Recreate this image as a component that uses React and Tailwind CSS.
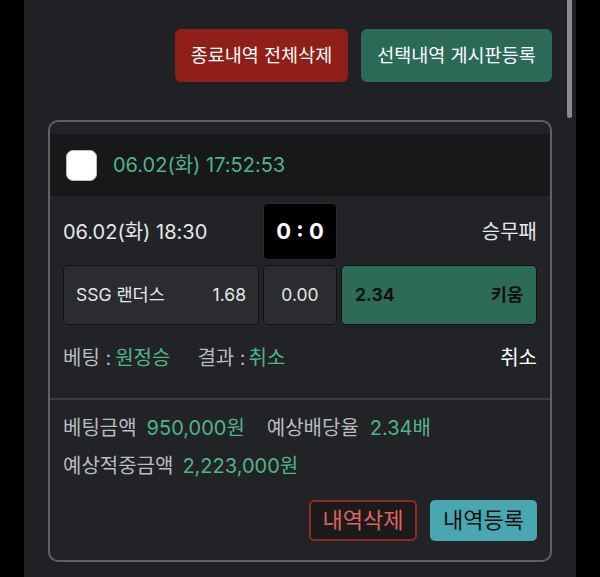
import React from "react";

const font = { fontFamily: 'Inter, "Noto Sans CJK KR", sans-serif' };

export default function App() {
  return (
    <div className="w-[600px] h-[577px] bg-black px-[24px]" style={font}>
      <div className="relative h-full bg-[#1f2124] px-[24px] overflow-hidden">
        <div className="absolute right-[4px] top-0 w-[5px] h-[118px] rounded-b-full bg-[#8a8b8f]" />
        <div className="flex justify-end gap-[13px] pt-[29px]">
          <button className="h-[53px] w-[173px] rounded-[6px] bg-[#8f1f18] text-white text-[18.5px]">
            종료내역 전체삭제
          </button>
          <button className="h-[53px] w-[191px] rounded-[6px] bg-[#2c6a58] text-white text-[18.5px]">
            선택내역 게시판등록
          </button>
        </div>

        <div className="mt-[38px] rounded-[10px] border-2 border-[#5f6164] bg-[#212327] pt-[12px] pb-[19px]">
          <div className="flex h-[62px] items-center gap-[16px] bg-[#17181a] px-[16px]">
            <div className="h-[31px] w-[31px] rounded-[7px] bg-white border border-[#bbb]" />
            <span className="text-[20px] text-[#50b487]">06.02(화) 17:52:53</span>
          </div>

          <div className="px-[13px]">
            <div className="mt-[7px] flex items-center">
              <div className="w-[200px] text-[20px] text-[#e6e7e9]">06.02(화) 18:30</div>
              <div className="flex h-[57px] w-[74px] items-center justify-center rounded-[4px] border border-[#2b2d31] bg-black text-[22px] font-bold text-white">
                0 : 0
              </div>
              <div className="flex-1 text-right text-[20px] text-[#e6e7e9]">승무패</div>
            </div>

            <div className="mt-[5px] flex h-[60px] gap-[4px]">
              <div className="flex w-[196px] items-center justify-between rounded-[5px] border border-[#111214] bg-[#2a2c30] px-[12px] text-[17.5px] text-[#e6e7e9]">
                <span>SSG 랜더스</span>
                <span>1.68</span>
              </div>
              <div className="flex w-[74px] items-center justify-center rounded-[5px] border border-[#111214] bg-[#2a2c30] text-[17.5px] text-[#e6e7e9]">
                0.00
              </div>
              <div className="flex flex-1 items-center justify-between rounded-[5px] border border-[#111214] bg-[#2e6b57] px-[13px] text-[17.5px] font-bold text-[#111]">
                <span>2.34</span>
                <span>키움</span>
              </div>
            </div>

            <div className="flex h-[66px] items-center text-[20px]">
              <span className="text-[#b9bbbf]">베팅 : </span>
              <span className="ml-[4px] text-[#50b487]">원정승</span>
              <span className="ml-[27px] text-[#b9bbbf]">결과 : </span>
              <span className="ml-[3px] text-[#50b487]">취소</span>
              <span className="ml-auto text-white">취소</span>
            </div>
          </div>

          <div className="mt-[7px] h-[2px] bg-[#3a3c40]" />

          <div className="px-[13px] pt-[13px] text-[20px]">
            <div className="flex items-center h-[30px]">
              <span className="text-[#b9bbbf]">베팅금액</span>
              <span className="ml-[10px] text-[#50b487]">950,000원</span>
              <span className="ml-[22px] text-[#b9bbbf]">예상배당율</span>
              <span className="ml-[11px] text-[#50b487]">2.34배</span>
            </div>
            <div className="mt-[8px] flex items-center h-[30px]">
              <span className="text-[#b9bbbf]">예상적중금액</span>
              <span className="ml-[9px] text-[#50b487]">2,223,000원</span>
            </div>
            <div className="mt-[19px] flex justify-end gap-[13px]">
              <button className="h-[41px] w-[108px] rounded-[5px] border-2 border-[#8a2a24] bg-[#1b1b1d] text-[22px] text-[#e0635b]">
                내역삭제
              </button>
              <button className="h-[41px] w-[107px] rounded-[5px] bg-[#4aa6b1] text-[22px] text-[#111]">
                내역등록
              </button>
            </div>
          </div>
        </div>
      </div>
    </div>
  );
}
